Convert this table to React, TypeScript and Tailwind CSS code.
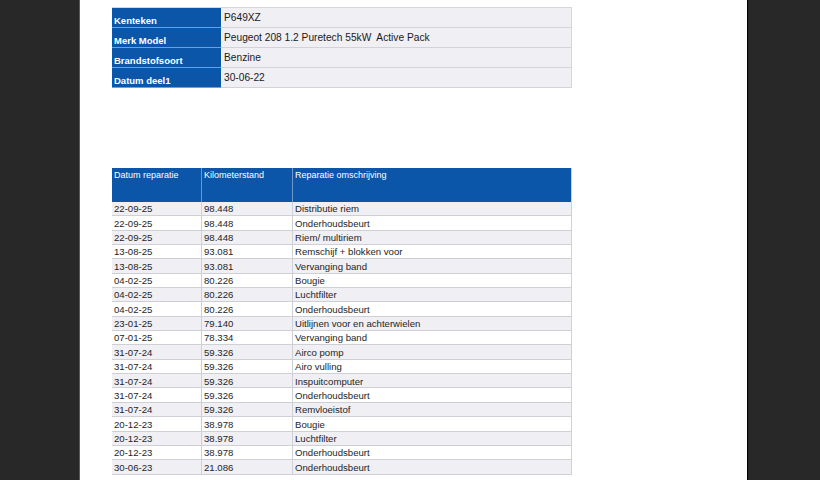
import React from 'react'

const info = [
  { label: 'Kenteken', value: 'P649XZ' },
  { label: 'Merk Model', value: 'Peugeot 208 1.2 Puretech 55kW\u00a0 Active Pack' },
  { label: 'Brandstofsoort', value: 'Benzine' },
  { label: 'Datum deel1', value: '30-06-22' },
]

const repairs: [string, string, string][] = [
  ['22-09-25', '98.448', 'Distributie riem'],
  ['22-09-25', '98.448', 'Onderhoudsbeurt'],
  ['22-09-25', '98.448', 'Riem/ multiriem'],
  ['13-08-25', '93.081', 'Remschijf + blokken voor'],
  ['13-08-25', '93.081', 'Vervanging band'],
  ['04-02-25', '80.226', 'Bougie'],
  ['04-02-25', '80.226', 'Luchtfilter'],
  ['04-02-25', '80.226', 'Onderhoudsbeurt'],
  ['23-01-25', '79.140', 'Uitlijnen voor en achterwielen'],
  ['07-01-25', '78.334', 'Vervanging band'],
  ['31-07-24', '59.326', 'Airco pomp'],
  ['31-07-24', '59.326', 'Airo vulling'],
  ['31-07-24', '59.326', 'Inspuitcomputer'],
  ['31-07-24', '59.326', 'Onderhoudsbeurt'],
  ['31-07-24', '59.326', 'Remvloeistof'],
  ['20-12-23', '38.978', 'Bougie'],
  ['20-12-23', '38.978', 'Luchtfilter'],
  ['20-12-23', '38.978', 'Onderhoudsbeurt'],
  ['30-06-23', '21.086', 'Onderhoudsbeurt'],
]

export default function App() {
  return (
    <div className="flex h-[480px] w-[820px] overflow-hidden bg-[#282828] font-['Liberation_Sans',Arial,sans-serif]">
      <div className="w-[79px] shrink-0" />
      <div className="w-px shrink-0 bg-[#5a5a5a]" />
      <div className="w-[668px] shrink-0 border-r border-black bg-white pl-[32px] pt-[7px]">
        {/* voertuiggegevens */}
        <div className="w-[460px] border-t border-r border-[#d6d6dc]">
          {info.map((row) => (
            <div key={row.label} className="grid h-[20px] grid-cols-[109px_1fr]">
              <div className="flex items-end border-b border-[#7a9ccc] bg-[#0b56a8] px-[2px] pb-[2px] text-[9.5px] font-bold leading-none text-white">
                {row.label}
              </div>
              <div className="flex items-center border-b border-[#d2d2d8] bg-[#efeff4] px-[3px] pt-[2px] text-[10.2px] leading-none text-[#1a1a1a]">
                {row.value}
              </div>
            </div>
          ))}
        </div>

        {/* reparaties */}
        <div className="mt-[80px] w-[460px] border-r border-[#d0d0d6] leading-none">
          <div className="grid h-[34px] grid-cols-[90px_91px_1fr] bg-[#0b56a8] text-[9px] text-white">
            <div className="border-r border-[#6f97cc] px-[2px] pt-[3px]">Datum reparatie</div>
            <div className="border-r border-[#6f97cc] px-[2px] pt-[3px]">Kilometerstand</div>
            <div className="px-[2px] pt-[3px]">Reparatie omschrijving</div>
          </div>
          {repairs.map((r, i) => (
            <div
              key={i}
              className={`grid h-[14.35px] grid-cols-[90px_91px_1fr] border-b border-[#cfcfd6] text-[9.6px] text-[#1e1e1e] ${
                i % 2 === 0 ? 'bg-[#efeff4]' : 'bg-white'
              }`}
            >
              <div className="flex items-center border-r border-[#cfcfd6] px-[2px] pt-px">{r[0]}</div>
              <div className="flex items-center border-r border-[#cfcfd6] px-[2px] pt-px">{r[1]}</div>
              <div className="flex items-center px-[2px] pt-px">{r[2]}</div>
            </div>
          ))}
        </div>
      </div>
      <div className="flex-1" />
    </div>
  )
}
